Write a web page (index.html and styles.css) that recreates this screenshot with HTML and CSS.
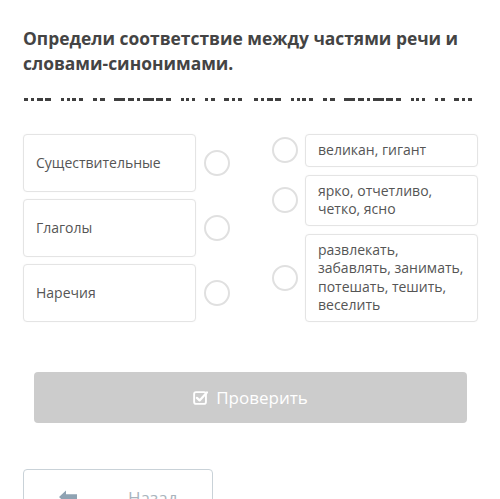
FILE: index.html
```html
<!DOCTYPE html>
<html lang="ru">
<head>
<meta charset="utf-8">
<link rel="stylesheet" href="styles.css">
</head>
<body>
<div class="page">
  <h1 class="title">Определи соответствие между частями речи и словами-синонимами.</h1>
  <div class="clipped">
    <div class="dash-group">
      <i class="d w3"></i><i class="d w2"></i><i class="d w5"></i><i class="d w5"></i><i class="g"></i>
      <i class="d w2"></i><i class="d w2"></i><i class="d w3"></i><i class="d w3"></i><i class="g"></i>
      <i class="d w3"></i><i class="d w4"></i><i class="g"></i>
      <i class="d w8"></i><i class="d w5"></i><i class="d w2"></i><i class="d w8"></i><i class="d w6"></i><i class="d w4"></i><i class="g"></i>
      <i class="d w2"></i><i class="d w2"></i><i class="d w2"></i><i class="g"></i>
      <i class="d w2"></i><i class="d w3"></i><i class="g"></i>
      <i class="d w4"></i><i class="d w2"></i><i class="d w3"></i>
    </div>
    <div class="dash-group">
      <i class="d w3"></i><i class="d w2"></i><i class="d w5"></i><i class="d w5"></i><i class="g"></i>
      <i class="d w2"></i><i class="d w2"></i><i class="d w3"></i><i class="d w3"></i><i class="g"></i>
      <i class="d w3"></i><i class="d w4"></i><i class="g"></i>
      <i class="d w8"></i><i class="d w5"></i><i class="d w2"></i><i class="d w8"></i><i class="d w6"></i><i class="d w4"></i><i class="g"></i>
      <i class="d w2"></i><i class="d w2"></i><i class="d w2"></i><i class="g"></i>
      <i class="d w2"></i><i class="d w3"></i><i class="g"></i>
      <i class="d w4"></i><i class="d w2"></i><i class="d w3"></i>
    </div>
  </div>

  <div class="match">
    <div class="col left">
      <div class="row">
        <div class="card tall">Существительные</div>
        <span class="dot"></span>
      </div>
      <div class="row">
        <div class="card tall">Глаголы</div>
        <span class="dot"></span>
      </div>
      <div class="row">
        <div class="card tall">Наречия</div>
        <span class="dot"></span>
      </div>
    </div>
    <div class="col right">
      <div class="row">
        <span class="dot"></span>
        <div class="card">великан, гигант</div>
      </div>
      <div class="row">
        <span class="dot"></span>
        <div class="card">ярко, отчетливо, четко, ясно</div>
      </div>
      <div class="row">
        <span class="dot"></span>
        <div class="card">развлекать, забавлять, занимать, потешать, тешить, веселить</div>
      </div>
    </div>
  </div>

  <div class="check-wrap">
    <button class="check" type="button">
      <svg class="check-icon" viewBox="0 0 16 16" width="15" height="15" aria-hidden="true">
        <rect x="1.2" y="2.2" width="12.6" height="12.6" rx="2" fill="none" stroke="#fff" stroke-width="2"/>
        <path d="M4.2 8.4 L7 11.1 L14.8 2.6" fill="none" stroke="#fff" stroke-width="2.4" stroke-linecap="round" stroke-linejoin="round"/>
      </svg>
      <span>Проверить</span>
    </button>
  </div>

  <button class="back" type="button">
    <svg class="back-icon" viewBox="0 0 20 16" width="20" height="16" aria-hidden="true">
      <path d="M1 8 L8 1.5 L8 5.3 L19 5.3 L19 10.7 L8 10.7 L8 14.5 Z" fill="#8fa3b3"/>
    </svg>
    <span>Назад</span>
  </button>
</div>
</body>
</html>
```

FILE: styles.css
```css
* { box-sizing: border-box; }

html, body {
  margin: 0;
  padding: 0;
  background: #ffffff;
}

body {
  font-family: "Open Sans", "Noto Sans", sans-serif;
  color: #555;
  overflow: hidden;
}

.page {
  padding: 26px 22px 0 23px;
}

.title {
  margin: 0;
  font-size: 17.4px;
  line-height: 25px;
  font-weight: 700;
  color: #444;
  letter-spacing: 0;
}

.clipped {
  margin-top: 22px;
  display: flex;
  gap: 12px;
  padding-left: 1px;
  height: 3px;
}

.dash-group {
  width: 218px;
  display: flex;
  justify-content: space-between;
  align-items: stretch;
}

.d {
  display: block;
  background: #3f3f3f;
  height: 3px;
}
.g { display: block; width: 4px; }
.w2 { width: 3px; }
.w3 { width: 4px; }
.w4 { width: 5px; }
.w5 { width: 6px; }
.w6 { width: 7px; }
.w8 { width: 11px; }

.match {
  margin-top: 33px;
  display: flex;
  justify-content: space-between;
}

.col {
  display: flex;
  flex-direction: column;
}

.left { gap: 7px; }
.right { gap: 8px; }

.row {
  display: flex;
  align-items: center;
}

.card {
  border: 1px solid #e4e4e4;
  border-radius: 4px;
  background: #fff;
  font-size: 14px;
  line-height: 18.5px;
  color: #555;
  box-shadow: 0 0 2px rgba(0,0,0,0.04);
}

.left .card {
  width: 173px;
  height: 58px;
  padding: 0 12px;
  display: flex;
  align-items: center;
}

.left .dot { margin-left: 8px; }

.right .card {
  width: 173px;
  padding: 6px 10px 6px 12px;
}

.right .dot { margin-right: 7px; }

.dot {
  width: 26px;
  height: 26px;
  border-radius: 50%;
  border: 2px solid #e0e0e0;
  background: #fff;
  flex: none;
}

.check-wrap {
  padding: 0 11px 0 11px;
  margin-top: 50px;
}

.check {
  width: 100%;
  height: 51px;
  border: none;
  border-radius: 4px;
  background: #cccccc;
  color: #fff;
  font-family: "Open Sans", "Noto Sans", sans-serif;
  font-size: 17px;
  display: flex;
  align-items: center;
  justify-content: center;
  gap: 8px;
  padding: 0;
}

.check-icon { margin-top: -1px; }

.back {
  margin-top: 46px;
  width: 190px;
  height: 50px;
  border: 1px solid #c9d2d8;
  border-radius: 4px;
  background: #fff;
  display: flex;
  align-items: flex-start;
  padding: 16px 0 0 34px;
  gap: 50px;
  font-family: "Open Sans", "Noto Sans", sans-serif;
  font-size: 17px;
  color: #a9b4bd;
}

.back-icon { margin-top: 3px; }
```
